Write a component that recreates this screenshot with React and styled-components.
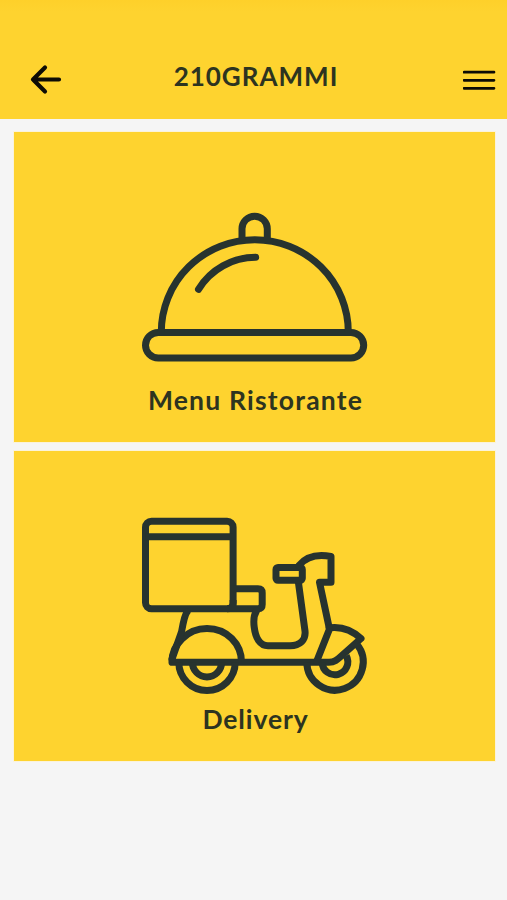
import React from "react";
import styled, { createGlobalStyle } from "styled-components";

const GlobalStyle = createGlobalStyle`
  * { box-sizing: border-box; }
  body { margin: 0; background: #f5f5f5; font-family: Lato, "Open Sans", sans-serif; }
`;

const Screen = styled.div`
  width: 507px;
  height: 900px;
  overflow: hidden;
  background: #f5f5f5;
`;

const Header = styled.header`
  display: flex;
  justify-content: space-between;
  height: 119px;
  padding: 64px 11px 0 30px;
  background: linear-gradient(#fed02a, #fed32f 12px);
`;

const IconButton = styled.button`
  display: block;
  width: 33px;
  height: 32px;
  padding: 0;
  border: 0;
  background: none;
`;

const Title = styled.h1`
  margin: -1px 14px 0 0;
  font-size: 26px;
  line-height: 26px;
  font-weight: 700;
  letter-spacing: ${(p) => p.$tracking}px;
  color: #2d3420;
  white-space: nowrap;
`;

const CardList = styled.main`
  display: flex;
  flex-direction: column;
  gap: 9px;
  padding: 13px 12px 0 14px;
`;

const Card = styled.a`
  display: flex;
  flex-direction: column;
  align-items: center;
  height: 310px;
  background: #fed32f;
  outline: 1px solid #fbf3da;
`;

const Illustration = styled.svg`
  display: block;
  flex: none;
  width: 241px;
  height: 254px;
  fill: none;
  stroke: #27332f;
  stroke-width: 7;
  stroke-linecap: round;
  stroke-linejoin: round;
`;

const Label = styled.span`
  padding-left: 2px;
  font-size: 26.5px;
  line-height: 28px;
  font-weight: 700;
  letter-spacing: ${(p) => p.$tracking}px;
  color: #2d3420;
  white-space: nowrap;
`;

const StrokeIcon = styled.svg`
  display: block;
  fill: none;
  stroke: #0d0b05;
  stroke-width: ${(p) => p.$weight};
  stroke-linecap: round;
  stroke-linejoin: round;
`;

function Cloche() {
  return (
    <Illustration viewBox="134 132 241 254">
      <rect x="145.5" y="332.4" width="218.2" height="25.5" rx="12.75" />
      <path strokeLinecap="butt" d="M161.3 332a93.5 92.2 0 0 1 187 0" />
      <path strokeLinecap="butt" d="M242 240v-11.2a12.65 12.65 0 0 1 25.3 0V240" />
      <path d="M198.5 289.3a67 67 0 0 1 57.2-32" />
    </Illustration>
  );
}

function Scooter() {
  return (
    <Illustration viewBox="134 451 241 254">
      <rect x="145.5" y="521.2" width="87.6" height="87.6" rx="6" />
      <path strokeLinecap="butt" d="M145.5 536.8H233M233 588.8H258Q262.2 588.8 262.2 593V604.5Q262.2 608.8 258 608.8H227M233.1 600V611" />
      <path d="M256.5 611C253.8 615 253.3 620 254.2 627C255.5 638 260 645.7 268 645.7H290C300 645.7 306 640 305 631L298.5 583" />
      <rect x="276" y="567.5" width="26.3" height="12.8" rx="2" />
      <path d="M299 565.5Q309.5 552.5 331 556.5V582.3H319.5L329.2 627.8" />
      <path d="M329.2 627.8C342 626 353 631 361 638.5L343 654.5C338 659 335 662.3 329 662.3H172C171.6 645 187 628.5 207 628.5S241.5 644 241.5 662.3" />
      <path d="M329.5 629L316.8 661M187 612Q184.5 615 181.5 632L172 659" />
      <path strokeLinecap="butt" d="M178.8 662.3a28.2 28.2 0 0 0 56.4 0M192.4 662.3a14.6 14.6 0 0 0 29.2 0" />
      <path strokeLinecap="butt" d="M306.8 662.3a28.2 28.2 0 1 0 50-18.2M322.2 662.3a12.8 12.8 0 1 0 24-6.5" />
    </Illustration>
  );
}

export default function App() {
  return (
    <Screen>
      <GlobalStyle />
      <Header>
        <IconButton aria-label="Back">
          <StrokeIcon $weight={4.2} width="33" height="32" viewBox="0 0 33 32">
            <path d="M29 15.5H3M15 3.5L3 15.5L15 27.5" />
          </StrokeIcon>
        </IconButton>
        <Title $tracking={1}>210GRAMMI</Title>
        <IconButton aria-label="Menu">
          <StrokeIcon $weight={2.7} width="33" height="32" viewBox="0 0 33 32">
            <path d="M1 8.2H31M1 16.3H31M1 24.3H31" />
          </StrokeIcon>
        </IconButton>
      </Header>
      <CardList>
        <Card>
          <Cloche />
          <Label $tracking={1.2}>Menu Ristorante</Label>
        </Card>
        <Card>
          <Scooter />
          <Label $tracking={0.9}>Delivery</Label>
        </Card>
      </CardList>
    </Screen>
  );
}
